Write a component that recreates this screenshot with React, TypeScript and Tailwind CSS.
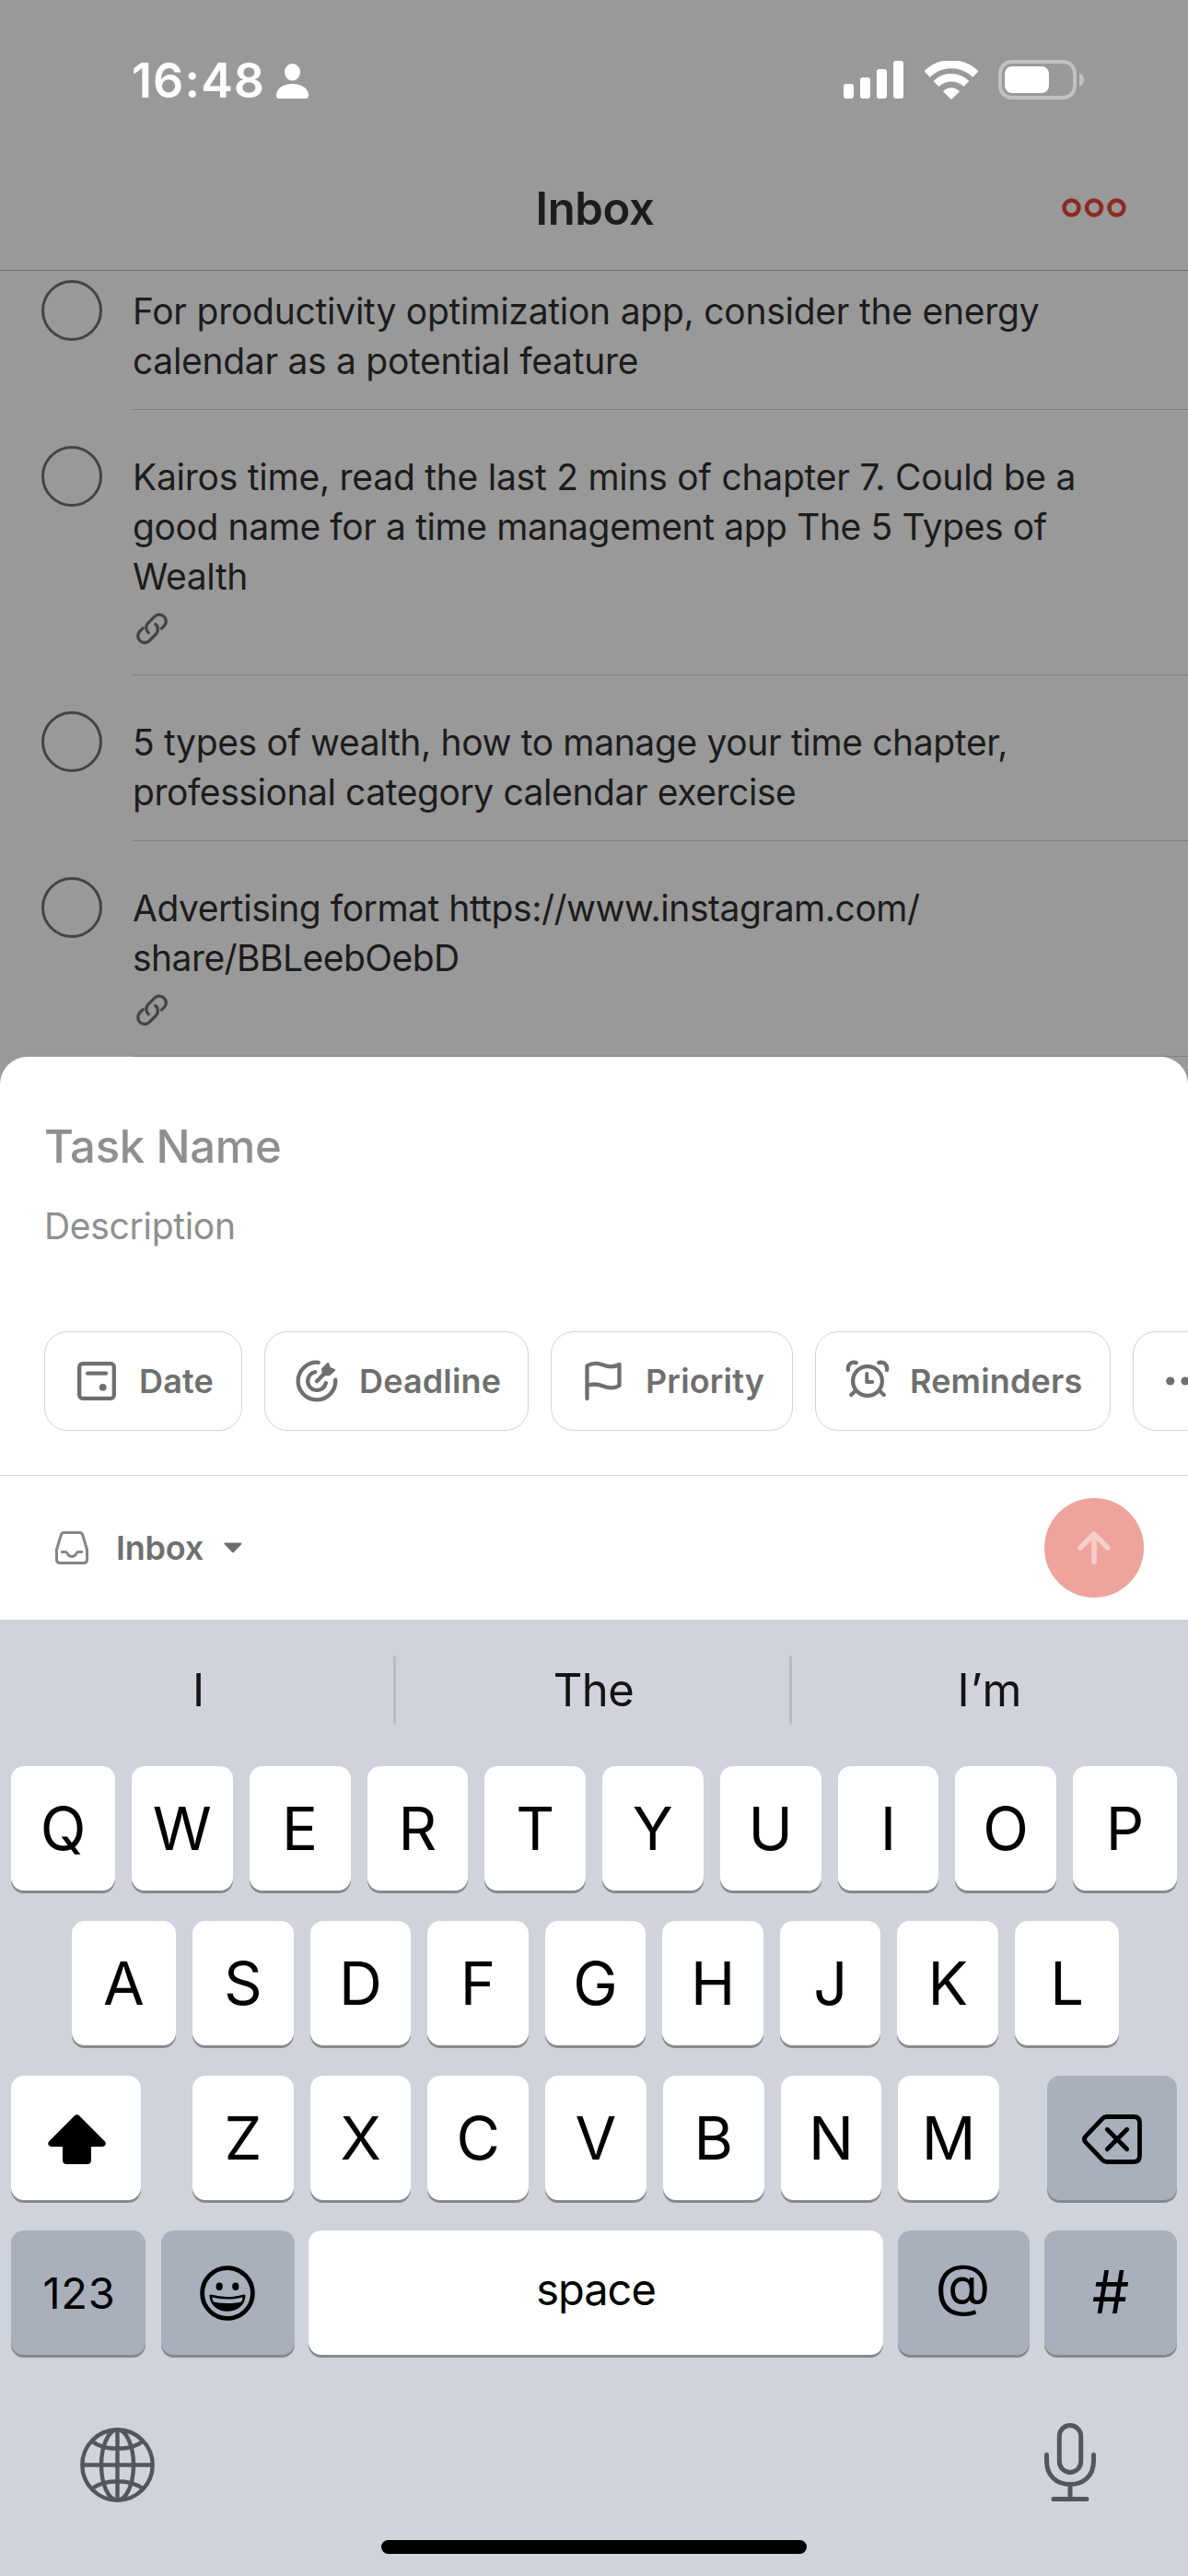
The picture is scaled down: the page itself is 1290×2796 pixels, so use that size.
import React, { type ReactNode } from "react";

type Line = { text: string; tracking: string };
type Task = { lines: Line[]; link?: boolean };

const tasks: Task[] = [
  {
    lines: [
      { text: "For productivity optimization app, consider the energy", tracking: "tracking-[-0.25px]" },
      { text: "calendar as a potential feature", tracking: "tracking-[-0.3px]" },
    ],
  },
  {
    lines: [
      { text: "Kairos time, read the last 2 mins of chapter 7. Could be a", tracking: "tracking-[-0.25px]" },
      { text: "good name for a time management app The 5 Types of", tracking: "tracking-[-0.4px]" },
      { text: "Wealth", tracking: "tracking-[-0.4px]" },
    ],
    link: true,
  },
  {
    lines: [
      { text: "5 types of wealth, how to manage your time chapter,", tracking: "tracking-[-0.36px]" },
      { text: "professional category calendar exercise", tracking: "tracking-[-0.43px]" },
    ],
  },
  {
    lines: [
      { text: "Advertising format https://www.instagram.com/", tracking: "tracking-[-0.46px]" },
      { text: "share/BBLeebOebD", tracking: "tracking-[-0.55px]" },
    ],
    link: true,
  },
];

function StatusBar() {
  return (
    <div className="flex h-[175px] items-center justify-between pl-[143px] pr-[113px] text-white">
      <div className="flex items-center gap-[12px]">
        <span className="text-[52px] font-semibold leading-none tracking-[1.1px]">16:48</span>
        <svg className="mt-[1px] h-[38px] w-[35px]" viewBox="0 0 35 38" fill="currentColor">
          <ellipse cx="17.5" cy="9.3" rx="8.5" ry="9.3" />
          <path d="M0 34.5C0 27 7.5 22 17.5 22S35 27 35 34.5C35 37 33.8 38 31.5 38H3.5C1.200 38 0 37 0 34.500Z" />
        </svg>
      </div>
      <div className="flex items-center pb-[2px]">
        <svg className="h-[41px] w-[65px]" viewBox="0 0 65 41" fill="currentColor">
          <rect x="0" y="25" width="11" height="16" rx="3" />
          <rect x="18" y="18" width="11" height="23" rx="3" />
          <rect x="36" y="9" width="11" height="32" rx="3" />
          <rect x="54" y="0" width="11" height="41" rx="3" />
        </svg>
        <svg className="ml-[23px] h-[42px] w-[58px]" viewBox="0 0 58 42" fill="none" stroke="currentColor">
          <path d="M2.600 14.600A37.500 37.500 0 0 1 55.400 14.600" strokeWidth="9" />
          <path d="M12.600 25A23.300 23.300 0 0 1 45.400 25" strokeWidth="8.500" />
          <path d="M29 41L21 33.200C25.500 28.800 32.500 28.800 37 33.200Z" fill="currentColor" strokeWidth="1.500" strokeLinejoin="round" />
        </svg>
        <svg className="ml-[22px] h-[43px] w-[93px]" viewBox="0 0 93 43">
          <rect x="2" y="2" width="81" height="39" rx="12.500" fill="none" stroke="#c2c2c2" strokeWidth="4" />
          <rect x="7" y="7" width="48" height="29" rx="8" fill="#fff" />
          <path d="M88 14.500C91.500 15.500 93 18.500 93 21.500S91.500 27.500 88 28.500Z" fill="#c2c2c2" />
        </svg>
      </div>
    </div>
  );
}

function LinkIcon() {
  return (
    <svg className="h-[36px] w-[36px]" viewBox="0 0 36 36" fill="none" stroke="#444" strokeWidth="3.300" strokeLinecap="round">
      <path d="M8.200 17.800L4.600 21.400A7.300 7.300 0 0 0 14.900 31.700L22.600 24A7.300 7.300 0 0 0 21.700 13.400" />
      <path d="M28.500 18.200L31.500 15.200A7.300 7.300 0 0 0 21.200 4.900L13.500 12.500A7.300 7.300 0 0 0 14.300 22.700" />
    </svg>
  );
}

function TaskRow({ task }: { task: Task }) {
  return (
    <div className="flex pl-[45px]">
      <div className="mt-[39px] h-[66px] w-[66px] shrink-0 rounded-full border-[3px] border-[#444]" />
      <div className="ml-[33px] flex-1 border-b border-[#7f7f7f] pt-[46px] pb-[25px]">
        <div className="text-[39px] leading-[54px] text-[#1c1c1c]">
          {task.lines.map((l) => (
            <p key={l.text} className={`whitespace-nowrap ${l.tracking}`}>
              {l.text}
            </p>
          ))}
        </div>
        {task.link && (
          <div className="flex h-[54px] items-center pl-[3px] pt-[4px]">
            <LinkIcon />
          </div>
        )}
      </div>
    </div>
  );
}

function ChipIcon({ children }: { children: ReactNode }) {
  return (
    <svg
      className="h-[48px] w-[48px] shrink-0"
      viewBox="0 0 48 48"
      fill="none"
      stroke="#6f6f6f"
      strokeWidth="4.300"
      strokeLinecap="round"
      strokeLinejoin="round"
    >
      {children}
    </svg>
  );
}

function Chip({ width, icon, label }: { width: string; icon: ReactNode; label?: string }) {
  return (
    <button
      className={`flex h-[108px] shrink-0 items-center gap-[22px] rounded-[25px] border border-[#d2d2d2] pl-[32px] ${width}`}
    >
      <ChipIcon>{icon}</ChipIcon>
      {label && <span className="text-[36px] font-semibold leading-none tracking-[0.15px] text-[#6f6f6f]">{label}</span>}
    </button>
  );
}

function Sheet() {
  return (
    <section className="h-[611px] rounded-t-[30px] bg-white pt-[68px]">
      <p className="pl-[48px] text-[49px] font-medium leading-[60px] tracking-[-0.3px] text-[#8f8f8f]">Task Name</p>
      <p className="mt-[31px] pl-[48px] text-[39px] leading-[50px] tracking-[-0.3px] text-[#8f8f8f]">Description</p>
      <div className="mt-[89px] flex gap-[24px] overflow-hidden pl-[48px]">
        <Chip
          width="w-[215px]"
          label="Date"
          icon={
            <>
              <rect x="5.200" y="5.200" width="37.600" height="37.600" rx="3.500" />
              <path d="M14.200 15.700H34" />
              <circle cx="30.700" cy="30.800" r="3.900" fill="#6f6f6f" stroke="none" />
            </>
          }
        />
        <Chip
          width="w-[287px]"
          label="Deadline"
          icon={
            <>
              <path d="M25.800 3.800A20.300 20.300 0 1 0 44.200 22.600" />
              <path d="M22.300 14.100A10 10 0 1 0 33.900 26" />
              <path d="M24 24.300L33 15" />
              <path d="M30 11L36.200 4.800L38 10L43.300 12L37.600 17.300H31Z" fill="#6f6f6f" strokeWidth="2" />
            </>
          }
        />
        <Chip
          width="w-[263px]"
          label="Priority"
          icon={
            <path d="M6.500 43V7.500C12.500 4 19 4.400 24 6.500C30 9.200 36 9 41.500 6V29C36 32.300 30 32 24 29.500C18.500 27.200 12 27 6.500 29" />
          }
        />
        <Chip
          width="w-[321px]"
          label="Reminders"
          icon={
            <>
              <circle cx="24" cy="24" r="15.900" />
              <path d="M23.300 16V25H29.300" strokeWidth="4" />
              <path d="M3 12C2 6.500 6.300 2.500 11.600 4.100" />
              <path d="M45 12C46 6.500 41.700 2.500 36.400 4.100" />
              <path d="M6.200 39L10.500 35M41.800 39L37.500 35" />
            </>
          }
        />
        <Chip
          width="w-[120px]"
          icon={
            <g fill="#6f6f6f" stroke="none">
              <circle cx="7.800" cy="24" r="4.600" />
              <circle cx="24" cy="24" r="4.600" />
              <circle cx="40.200" cy="24" r="4.600" />
            </g>
          }
        />
      </div>
      <div className="mt-[48px] flex h-[157px] items-center border-t border-[#d2d2d2] pl-[60px] pr-[48px]">
        <svg className="h-[36px] w-[36px]" viewBox="0 0 36 36" fill="none" stroke="#858585" strokeWidth="3" strokeLinecap="round">
          <path d="M9.500 1.500H26.500Q29 1.500 29.700 4L34.500 20V30.500Q34.500 34.500 30.500 34.500H5.500Q1.500 34.500 1.500 30.500V20L6.300 4Q7 1.500 9.500 1.500Z" />
          <path d="M7.300 22.600H11.200C13.300 22.600 13 27.400 18 27.400S22.700 22.600 24.800 22.600H28.700" />
        </svg>
        <span className="ml-[30px] text-[36px] font-semibold leading-none tracking-[-0.2px] text-[#6f6f6f]">Inbox</span>
        <svg className="ml-[22px] h-[12px] w-[20px]" viewBox="0 0 20 12" fill="#6f6f6f" stroke="#6f6f6f" strokeWidth="2" strokeLinejoin="round">
          <path d="M1.500 1.500H18.500L10 10.300Z" />
        </svg>
        <button className="ml-auto flex h-[108px] w-[108px] items-center justify-center rounded-full bg-[#eea49c]">
          <svg className="h-[36px] w-[36px]" viewBox="0 0 36 36" fill="none" stroke="#f6cfcb" strokeWidth="5.500" strokeLinecap="round" strokeLinejoin="round">
            <path d="M18 33.200V3M3 18L18 3L33 18" />
          </svg>
        </button>
      </div>
    </section>
  );
}

const letterKey = "flex-1 bg-white text-[65px]";
const edgeKey = "w-[113px] bg-white text-[65px]";

function Key({ children, className = letterKey }: { children: ReactNode; className?: string }) {
  return (
    <button
      className={`flex h-[135px] items-center justify-center rounded-[14px] leading-none text-black shadow-[0_3px_0_#88898d] ${className}`}
    >
      {children}
    </button>
  );
}

function LetterRow({ letters, wideEdges = false }: { letters: string; wideEdges?: boolean }) {
  return letters.split("").map((k, i) => (
    <Key key={k} className={wideEdges && (i === 0 || i === letters.length - 1) ? edgeKey : letterKey}>
      {k}
    </Key>
  ));
}

function Keyboard() {
  return (
    <section className="h-[1038px] bg-[#d0d3db]">
      <div className="flex h-[153px] items-center text-center text-[49px] leading-none text-[#141414]">
        <span className="w-[427px] pl-[4px]">I</span>
        <span className="h-[75px] w-[3px] rounded-full bg-[#babcc0]" />
        <span className="w-[427px] pl-[2px] tracking-[-0.6px]">The</span>
        <span className="h-[75px] w-[3px] rounded-full bg-[#babcc0]" />
        <span className="flex-1 tracking-[1px]">I’m</span>
      </div>
      <div className="mt-[6px] flex flex-col gap-[33px] px-[12px]">
        <div className="flex gap-[18px]">
          <LetterRow letters="QWERTYUIOP" wideEdges />
        </div>
        <div className="flex gap-[18px] pl-[66px] pr-[63px]">
          <LetterRow letters="ASDFGHJKL" wideEdges />
        </div>
        <div className="flex">
          <Key className="w-[141px] bg-white">
            <svg className="ml-[2px] mt-[2px] h-[54px] w-[63px]" viewBox="0 0 63 54">
              <path d="M28.800 1.500Q31.500 -1 34.200 1.500L61.800 29.300Q63.500 31.300 62.300 33.300Q61.300 35 59 35H47V49.500Q47 54 42.500 54H20.500Q16 54 16 49.500V35H4Q1.700 35 .7 33.300Q-.5 31.300 1.200 29.300Z" />
            </svg>
          </Key>
          <div className="ml-[56px] mr-[52px] flex flex-1 gap-[18px]">
            <LetterRow letters="ZXCVBNM" />
          </div>
          <Key className="w-[141px] bg-[#a9afbb]">
            <svg className="mt-[2px] h-[54px] w-[65px]" viewBox="0 0 65 54" fill="none" stroke="#000" strokeWidth="4.800" strokeLinecap="round">
              <path d="M27 2.500H56Q62.500 2.500 62.500 9V45Q62.500 51.500 56 51.500H27Q24 51.500 22 49.300L4 30.500Q1 27 4 23.500L22 4.700Q24 2.500 27 2.500Z" />
              <path d="M27.300 16.300L48.700 37.700M48.700 16.300L27.300 37.700" />
            </svg>
          </Key>
        </div>
        <div className="flex">
          <Key className="w-[146px] bg-[#a9afbb] pl-[2px] text-[47px] tracking-[0.8px]">123</Key>
          <Key className="ml-[17px] w-[145px] bg-[#a9afbb]">
            <svg className="ml-[-2px] h-[60px] w-[60px]" viewBox="0 0 60 60">
              <circle cx="30" cy="30" r="27.400" fill="none" stroke="#000" strokeWidth="4.800" />
              <ellipse cx="21.200" cy="22.800" rx="3.600" ry="4.200" />
              <ellipse cx="38.800" cy="22.800" rx="3.600" ry="4.200" />
              <path d="M11.800 32.800Q30 37.800 48.200 32.800C47.500 42.500 40 48.500 30 48.500S12.500 42.500 11.800 32.800Z" fill="none" stroke="#000" strokeWidth="2.600" strokeLinejoin="round" />
              <path d="M14.500 39.500Q30 42.500 45.500 39.500C42.500 45.500 37 48.500 30 48.500S17.500 45.500 14.500 39.500Z" />
            </svg>
          </Key>
          <Key className="ml-[15px] w-[624px] bg-white pb-[9px] text-[47px] tracking-[-1px]">space</Key>
          <Key className="ml-[16px] w-[143px] bg-[#a9afbb] pb-[17px] pr-[2px] text-[62px]">@</Key>
          <Key className="ml-[16px] w-[144px] bg-[#a9afbb] pb-[2px] text-[64px]">#</Key>
        </div>
      </div>
      <div className="mt-[68px] flex h-[97px] items-center justify-between pl-[87px] pr-[100px]">
        <svg className="mt-[6px] h-[81px] w-[81px]" viewBox="0 0 81 81" fill="none" stroke="#52565f" strokeWidth="4.400">
          <circle cx="40.500" cy="40.500" r="38.200" />
          <ellipse cx="40.500" cy="40.500" rx="17.500" ry="38.200" />
          <path d="M40.500 2V79M2 40.500H79M12.500 14.500C20 20.500 30 22.800 40.500 22.800S61 20.500 68.500 14.500M12.500 66.500C20 60.500 30 58.200 40.500 58.200S61 60.500 68.500 66.500" />
        </svg>
        <svg className="h-[85px] w-[56px]" viewBox="0 0 56 85" fill="none" stroke="#52565f" strokeWidth="5" strokeLinecap="round">
          <rect x="16.300" y="2.500" width="23.400" height="51" rx="11.700" />
          <path d="M2.500 34.500V41C2.500 57 13 66.500 28 66.500S53.500 57 53.500 41V34.500M28 66.500V82M10 82.400H46" />
        </svg>
      </div>
      <div className="mx-auto mt-[36px] h-[15px] w-[462px] rounded-full bg-black" />
    </section>
  );
}

export default function App() {
  return (
    <div className="h-[2796px] w-[1290px] overflow-hidden bg-[#999] font-['Inter',sans-serif]">
      <header className="h-[294px] border-b border-[#6d6d6d]">
        <StatusBar />
        <div className="grid h-[104px] grid-cols-[1fr_auto_1fr] items-center">
          <span />
          <h1 className="pb-[2px] pl-[2px] text-center text-[49px] font-semibold leading-none tracking-[-0.4px] text-[#1c1c1c]">
            Inbox
          </h1>
          <svg className="mb-[3px] mr-[67px] h-[21px] w-[70px] justify-self-end" viewBox="0 0 70 21" fill="none" stroke="#8c2b22" strokeWidth="4.500">
            <circle cx="10.500" cy="10.500" r="8" />
            <circle cx="35" cy="10.500" r="8" />
            <circle cx="59.500" cy="10.500" r="8" />
          </svg>
        </div>
      </header>
      <main className="h-[853px] overflow-hidden">
        <div className="-mt-[29px]">
          {tasks.map((t) => (
            <TaskRow key={t.lines[0].text} task={t} />
          ))}
        </div>
      </main>
      <Sheet />
      <Keyboard />
    </div>
  );
}
